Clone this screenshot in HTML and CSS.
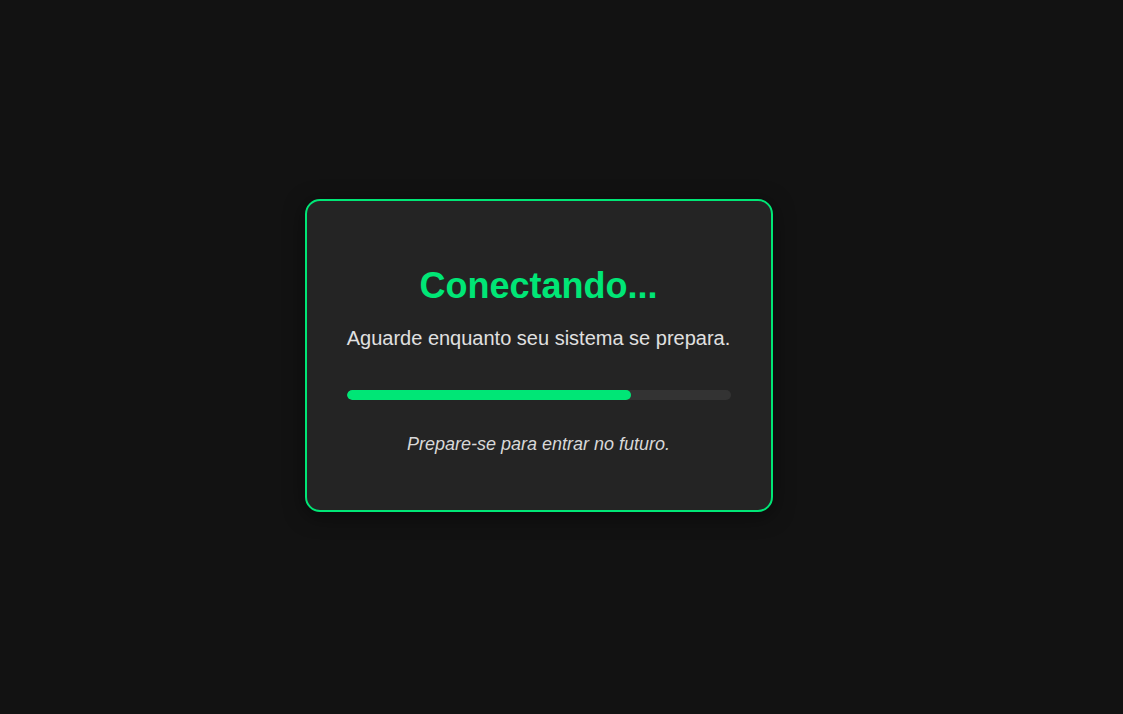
FILE: index.html
```html
<!DOCTYPE html>
<html lang="pt-BR">
<head>
<meta charset="utf-8">
<title>Conectando...</title>
<link rel="stylesheet" href="styles.css">
</head>
<body>
<main class="stage">
  <section class="card">
    <h1 class="title">Conectando...</h1>
    <p class="subtitle">Aguarde enquanto seu sistema se prepara.</p>
    <div class="progress"><div class="progress-fill" style="width: 74%"></div></div>
    <p class="note">Prepare-se para entrar no futuro.</p>
  </section>
</main>
</body>
</html>
```

FILE: styles.css
```css
html, body {
  margin: 0;
  padding: 0;
  height: 100%;
}
body {
  background: #121212;
  font-family: "Liberation Sans", Arial, sans-serif;
  color: #e0e0e0;
}
.stage {
  height: 100%;
  display: flex;
  align-items: center;
  justify-content: center;
  padding: 0 46px 4px 0;
  box-sizing: border-box;
}
.card {
  width: 384px;
  padding: 40px;
  background: #242424;
  border: 2px solid #00e676;
  border-radius: 15px;
  box-shadow: 0 4px 20px rgba(0, 0, 0, 0.5);
  text-align: center;
}
.title {
  margin: 24px 0 20px;
  font-size: 36px;
  font-weight: bold;
  color: #00e676;
}
.subtitle {
  margin: 0 0 40px;
  font-size: 20px;
  color: #e0e0e0;
}
.progress {
  height: 10px;
  background: #333333;
  border-radius: 5px;
  overflow: hidden;
}
.progress-fill {
  height: 100%;
  background: #00e676;
  border-radius: 5px;
}
.note {
  margin: 34px 0 15px;
  font-size: 18px;
  font-style: italic;
  color: #d8d8d8;
}
```
